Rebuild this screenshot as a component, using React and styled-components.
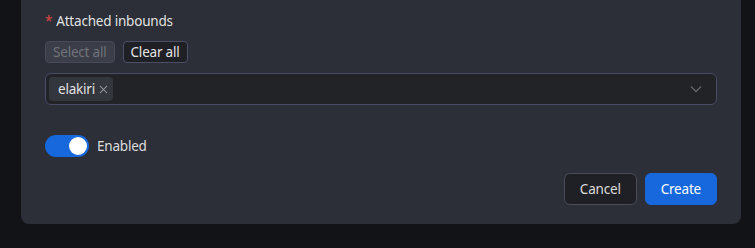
import React from "react";
import styled, { createGlobalStyle } from "styled-components";

const Global = createGlobalStyle`
  html, body { margin: 0; padding: 0; background: #121316; }
  body { font-family: "Noto Sans", "Open Sans", sans-serif; font-size: 13.5px; letter-spacing: -0.2px; color: rgba(255,255,255,0.85); }
  * { box-sizing: border-box; }
`;

const Page = styled.div`
  width: 755px;
  height: 248px;
  padding-left: 21px;
`;

const Panel = styled.div`
  width: 720px;
  background: #2c2f37;
  border-radius: 0 0 8px 8px;
  padding: 10px 24px 19px;
  display: flex;
  flex-direction: column;
`;

const Label = styled.div`
  height: 22px;
  line-height: 22px;
  display: flex;
  align-items: center;
  gap: 4px;
  color: rgba(255,255,255,0.88);
`;

const Star = styled.span`
  color: #dc4446;
`;

const BtnRow = styled.div`
  display: flex;
  gap: 8px;
  margin-top: 9px;
`;

const SmallBtn = styled.button`
  height: 22px;
  padding: 0 7px;
  border-radius: 4px;
  font: inherit;
  letter-spacing: inherit;
  line-height: 20px;
  border: 1px solid ${(p) => (p.disabled ? "#474a58" : "#4c4f68")};
  background: ${(p) => (p.disabled ? "#3b3e48" : "#1f2025")};
  color: ${(p) => (p.disabled ? "rgba(255,255,255,0.28)" : "rgba(255,255,255,0.9)")};
`;

const Select = styled.div`
  margin-top: 10px;
  height: 32px;
  border: 1px solid #474b66;
  border-radius: 6px;
  background: #222327;
  display: flex;
  align-items: center;
  padding: 0 3px;
`;

const Tag = styled.span`
  height: 24px;
  display: inline-flex;
  align-items: center;
  gap: 4px;
  padding: 0 5px 0 9px;
  background: #34363e;
  border-radius: 4px;
  color: rgba(255,255,255,0.88);
`;

const Close = styled.span`
  color: rgba(255,255,255,0.45);
  display: inline-flex;
`;

const Arrow = styled.span`
  margin-left: auto;
  margin-right: 11px;
  display: inline-flex;
  color: rgba(255,255,255,0.3);
`;

const SwitchRow = styled.div`
  display: flex;
  align-items: center;
  gap: 8px;
  margin-top: 30px;
`;

const Switch = styled.span`
  width: 44px;
  height: 22px;
  border-radius: 11px;
  background: #1668dc;
  display: flex;
  align-items: center;
  justify-content: flex-end;
  padding: 2px;
`;

const Knob = styled.span`
  width: 18px;
  height: 18px;
  border-radius: 50%;
  background: #fff;
`;

const Footer = styled.div`
  display: flex;
  justify-content: flex-end;
  gap: 8px;
  margin-top: 16px;
`;

const Btn = styled.button`
  height: 32px;
  padding: 0 15px;
  border-radius: 6px;
  font: inherit;
  letter-spacing: inherit;
  border: 1px solid ${(p) => (p.primary ? "#1668dc" : "#4a4c5a")};
  background: ${(p) => (p.primary ? "#1668dc" : "#1f2025")};
  color: ${(p) => (p.primary ? "#fff" : "rgba(255,255,255,0.85)")};
`;

export default function App() {
  return (
    <>
      <Global />
      <Page>
        <Panel>
          <Label>
            <Star>*</Star>
            Attached inbounds
          </Label>
          <BtnRow>
            <SmallBtn disabled>Select all</SmallBtn>
            <SmallBtn>Clear all</SmallBtn>
          </BtnRow>
          <Select>
            <Tag>
              elakiri
              <Close>
                <svg width="9" height="9" viewBox="0 0 10 10">
                  <path d="M1 1L9 9M9 1L1 9" stroke="currentColor" strokeWidth="1.2" />
                </svg>
              </Close>
            </Tag>
            <Arrow>
              <svg width="12" height="8" viewBox="0 0 12 8">
                <path d="M1 1.5L6 6.5L11 1.5" fill="none" stroke="currentColor" strokeWidth="1.3" />
              </svg>
            </Arrow>
          </Select>
          <SwitchRow>
            <Switch>
              <Knob />
            </Switch>
            <span>Enabled</span>
          </SwitchRow>
          <Footer>
            <Btn>Cancel</Btn>
            <Btn primary>Create</Btn>
          </Footer>
        </Panel>
      </Page>
    </>
  );
}
